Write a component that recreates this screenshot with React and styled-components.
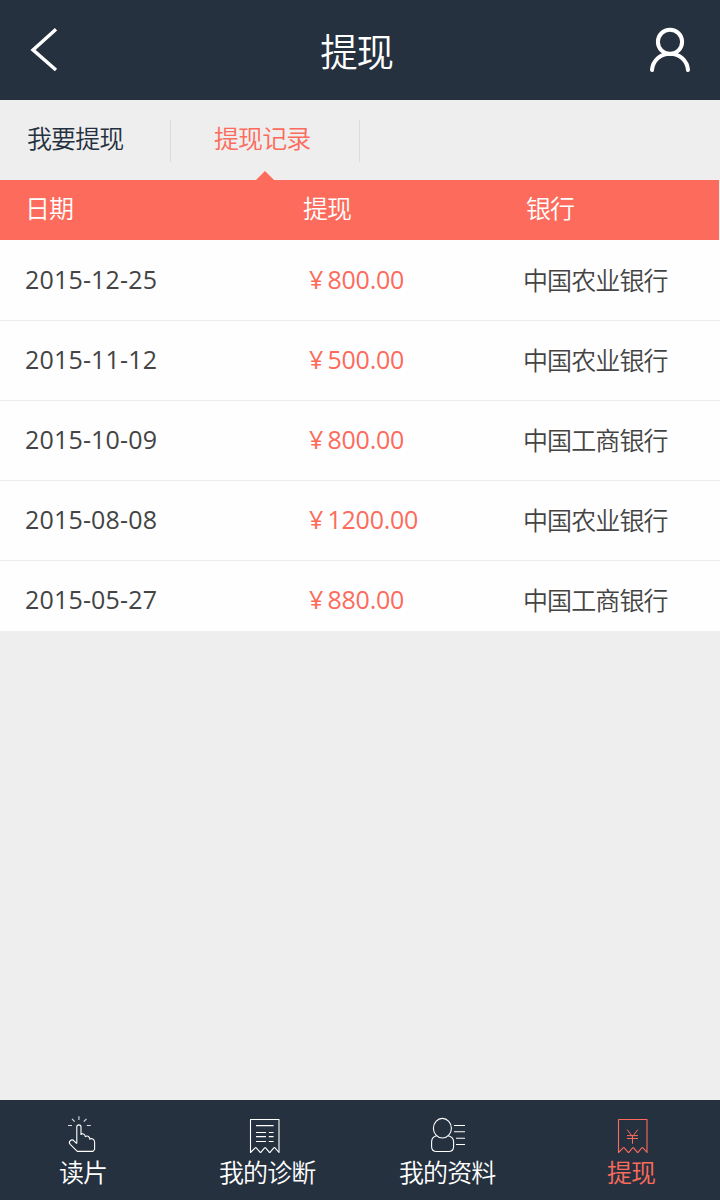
import React from 'react';
import styled, { createGlobalStyle } from 'styled-components';

const coral = '#fc6b5b';
const navy = '#26313f';

const GlobalStyle = createGlobalStyle`
  * { box-sizing: border-box; }
  body {
    margin: 0;
    background: #eeeeee;
  }
`;

const Screen = styled.div`
  display: flex;
  flex-direction: column;
  width: 720px;
  height: 1200px;
  background: #eeeeee;
  overflow: hidden;
  font-family: 'Noto Sans CJK SC', sans-serif;
  font-weight: 350;
  font-size: 25px;
  letter-spacing: -0.9px;
  line-height: 36px;
  white-space: nowrap;
`;

const Header = styled.header`
  display: grid;
  grid-template-columns: 100px 1fr 100px;
  align-items: center;
  flex: none;
  height: 100px;
  background: ${navy};
  color: #fff;
`;

const Title = styled.h1`
  margin: 0;
  padding: 0 7px 0 0;
  font-size: 37.5px;
  letter-spacing: -1.2px;
  line-height: 54px;
  font-weight: inherit;
  text-align: center;
`;

const IconButton = styled.button`
  display: flex;
  width: 100px;
  height: 100px;
  padding: 0;
  border: 0;
  background: none;
  color: inherit;
`;

const Tabs = styled.nav`
  display: flex;
  align-items: flex-start;
  flex: none;
  height: 80px;
  padding-top: 20px;
`;

const Tab = styled.a`
  position: relative;
  width: ${(p) => p.$width}px;
  height: 42px;
  padding-left: ${(p) => p.$indent}px;
  border-right: 1px solid #dcdcdc;
  line-height: 35px;
  color: ${(p) => (p.$active ? coral : navy)};
`;

const Pointer = styled.span`
  position: absolute;
  left: 85px;
  top: 51px;
  border: solid transparent;
  border-width: 0 9.5px 9px;
  border-bottom-color: ${coral};
`;

const TableHead = styled.div`
  display: grid;
  grid-template-columns: 278px 223px 1fr;
  flex: none;
  width: 719px;
  height: 60px;
  padding: 9px 0 0 25px;
  background: ${coral};
  color: #fff;
`;

const TableBody = styled.div`
  flex: none;
  height: 391px;
  overflow: hidden;
  background: #fefefe;
`;

const Row = styled.div`
  display: grid;
  grid-template-columns: 284px 214px 1fr;
  align-items: center;
  height: 80px;
  padding: 0 0 2px 25px;
  color: #444;

  & + & {
    box-shadow: inset 0 1px #ececec;
  }
`;

const DateCell = styled.span`
  font-family: 'Open Sans', sans-serif;
  font-weight: 400;
  font-size: 25px;
  letter-spacing: 0.18px;
`;

const Amount = styled.span`
  display: flex;
  font-family: 'Open Sans', sans-serif;
  font-weight: 400;
  font-size: 25px;
  letter-spacing: -0.25px;
  color: ${coral};
`;

const Currency = styled.span`
  width: 18.5px;
`;

const Bank = styled.span``;

const Spacer = styled.div`
  flex: 1;
`;

const BottomBar = styled.nav`
  display: flex;
  flex: none;
  height: 100px;
  padding-top: 10px;
  background: ${navy};
`;

const NavItem = styled.a`
  display: flex;
  flex-direction: column;
  align-items: flex-start;
  width: 180px;
  color: ${(p) => (p.$active ? coral : '#fff')};

  svg {
    display: block;
    flex: none;
    margin-left: ${(p) => p.$iconX}px;
  }
`;

const NavLabel = styled.span`
  margin: -3px 0 0 ${(p) => p.$x}px;
`;

const BackIcon = () => (
  <svg width="100" height="100" viewBox="0 0 100 100" fill="none" stroke="currentColor" strokeWidth="3.4">
    <path d="M56 29.3 33 49.9 56 70" />
  </svg>
);

const UserIcon = () => (
  <svg width="100" height="100" viewBox="0 0 100 100" fill="none" stroke="currentColor" strokeWidth="4" strokeLinecap="round">
    <circle cx="50" cy="41.8" r="12.1" />
    <path d="M32 70C32.8 60.5 40.5 53.8 50 53.8S67.2 60.5 68 70" />
  </svg>
);

const TapIcon = () => (
  <svg width="48" height="46" viewBox="0 0 48 46" fill="none" stroke="currentColor" strokeWidth="1.1" strokeLinejoin="round">
    <path d="M16.8 33.6V17A2.1 2.1 0 0 1 21 17V24.5C22.5 23 25 23.8 25.3 26.7C27 25.2 29.6 26.2 29.8 29.1C31.5 28 34.6 29.2 34.6 32V39.5L32.9 41.4H17.3L10.2 34.4C7.8 31.5 11.6 28.3 14.2 31.1L16.8 33.6" />
    <path d="M18.9 6.3V10M12 8.8 14.7 11.6M26.5 8.8 23.8 11.6M8 15.5H12M26.8 15.5H30.8" opacity=".85" />
  </svg>
);

const Receipt = ({ children }) => (
  <svg width="48" height="46" viewBox="0 0 48 46" fill="none" stroke="currentColor" strokeWidth="1.1" strokeLinejoin="round">
    <path d="M9.5 42.5V9.5H38V42.5L33.8 37.7Q33.3 37.3 32.8 37.8L29.2 42.2Q28.7 42.6 28.2 42.2L24.6 37.8Q24.1 37.3 23.6 37.8L20 42.2Q19.5 42.6 19 42.2L15.2 37.8Q14.7 37.3 14.2 37.8Z" />
    {children}
  </svg>
);

const DiagnosisIcon = () => (
  <Receipt>
    <path d="M15 15.6H32.6M15 22.5H25M27.8 22.5H32.6M15 26.6H25M27.8 26.6H32.6M15 31.5H25M27.8 31.5H32.6" />
  </Receipt>
);

const WithdrawIcon = () => (
  <Receipt>
    <path d="M18.2 19.6 23.5 26.8 28.8 19.6M23.5 26.8V33.8M18 25.6H29M18 28.5H29" strokeWidth="1" />
  </Receipt>
);

const ProfileIcon = () => (
  <svg width="48" height="46" viewBox="0 0 48 46" fill="none" stroke="currentColor" strokeWidth="1.1">
    <ellipse cx="18.4" cy="18.2" rx="9" ry="9.8" />
    <path d="M12.7 25.8C9 26.7 7.6 29 7.6 32V36.5Q7.6 41.5 12.6 41.5H24.6Q29.6 41.5 29.6 36.5V32C29.6 29 28.2 26.7 24.1 25.8" />
    <path d="M30 15.5H41M30 21.7H41M32 28.2H41M32 34.5H41" />
  </svg>
);

const records = [
  { date: '2015-12-25', amount: '800.00', bank: '中国农业银行' },
  { date: '2015-11-12', amount: '500.00', bank: '中国农业银行' },
  { date: '2015-10-09', amount: '800.00', bank: '中国工商银行' },
  { date: '2015-08-08', amount: '1200.00', bank: '中国农业银行' },
  { date: '2015-05-27', amount: '880.00', bank: '中国工商银行' },
];

const navItems = [
  { label: '读片', Icon: TapIcon, iconX: 60, labelX: 59 },
  { label: '我的诊断', Icon: DiagnosisIcon, iconX: 61, labelX: 39 },
  { label: '我的资料', Icon: ProfileIcon, iconX: 64, labelX: 39 },
  { label: '提现', Icon: WithdrawIcon, iconX: 69, labelX: 67, active: true },
];

export default function App() {
  return (
    <Screen>
      <GlobalStyle />
      <Header>
        <IconButton aria-label="返回"><BackIcon /></IconButton>
        <Title>提现</Title>
        <IconButton aria-label="我的"><UserIcon /></IconButton>
      </Header>
      <Tabs>
        <Tab $width={171} $indent={27}>我要提现</Tab>
        <Tab $width={189} $indent={43} $active>
          提现记录
          <Pointer />
        </Tab>
      </Tabs>
      <TableHead>
        <span>日期</span>
        <span>提现</span>
        <span>银行</span>
      </TableHead>
      <TableBody>
        {records.map((r) => (
          <Row key={r.date}>
            <DateCell>{r.date}</DateCell>
            <Amount><Currency>¥</Currency>{r.amount}</Amount>
            <Bank>{r.bank}</Bank>
          </Row>
        ))}
      </TableBody>
      <Spacer />
      <BottomBar>
        {navItems.map(({ label, Icon, iconX, labelX, active }) => (
          <NavItem key={label} $iconX={iconX} $active={active}>
            <Icon />
            <NavLabel $x={labelX}>{label}</NavLabel>
          </NavItem>
        ))}
      </BottomBar>
    </Screen>
  );
}
